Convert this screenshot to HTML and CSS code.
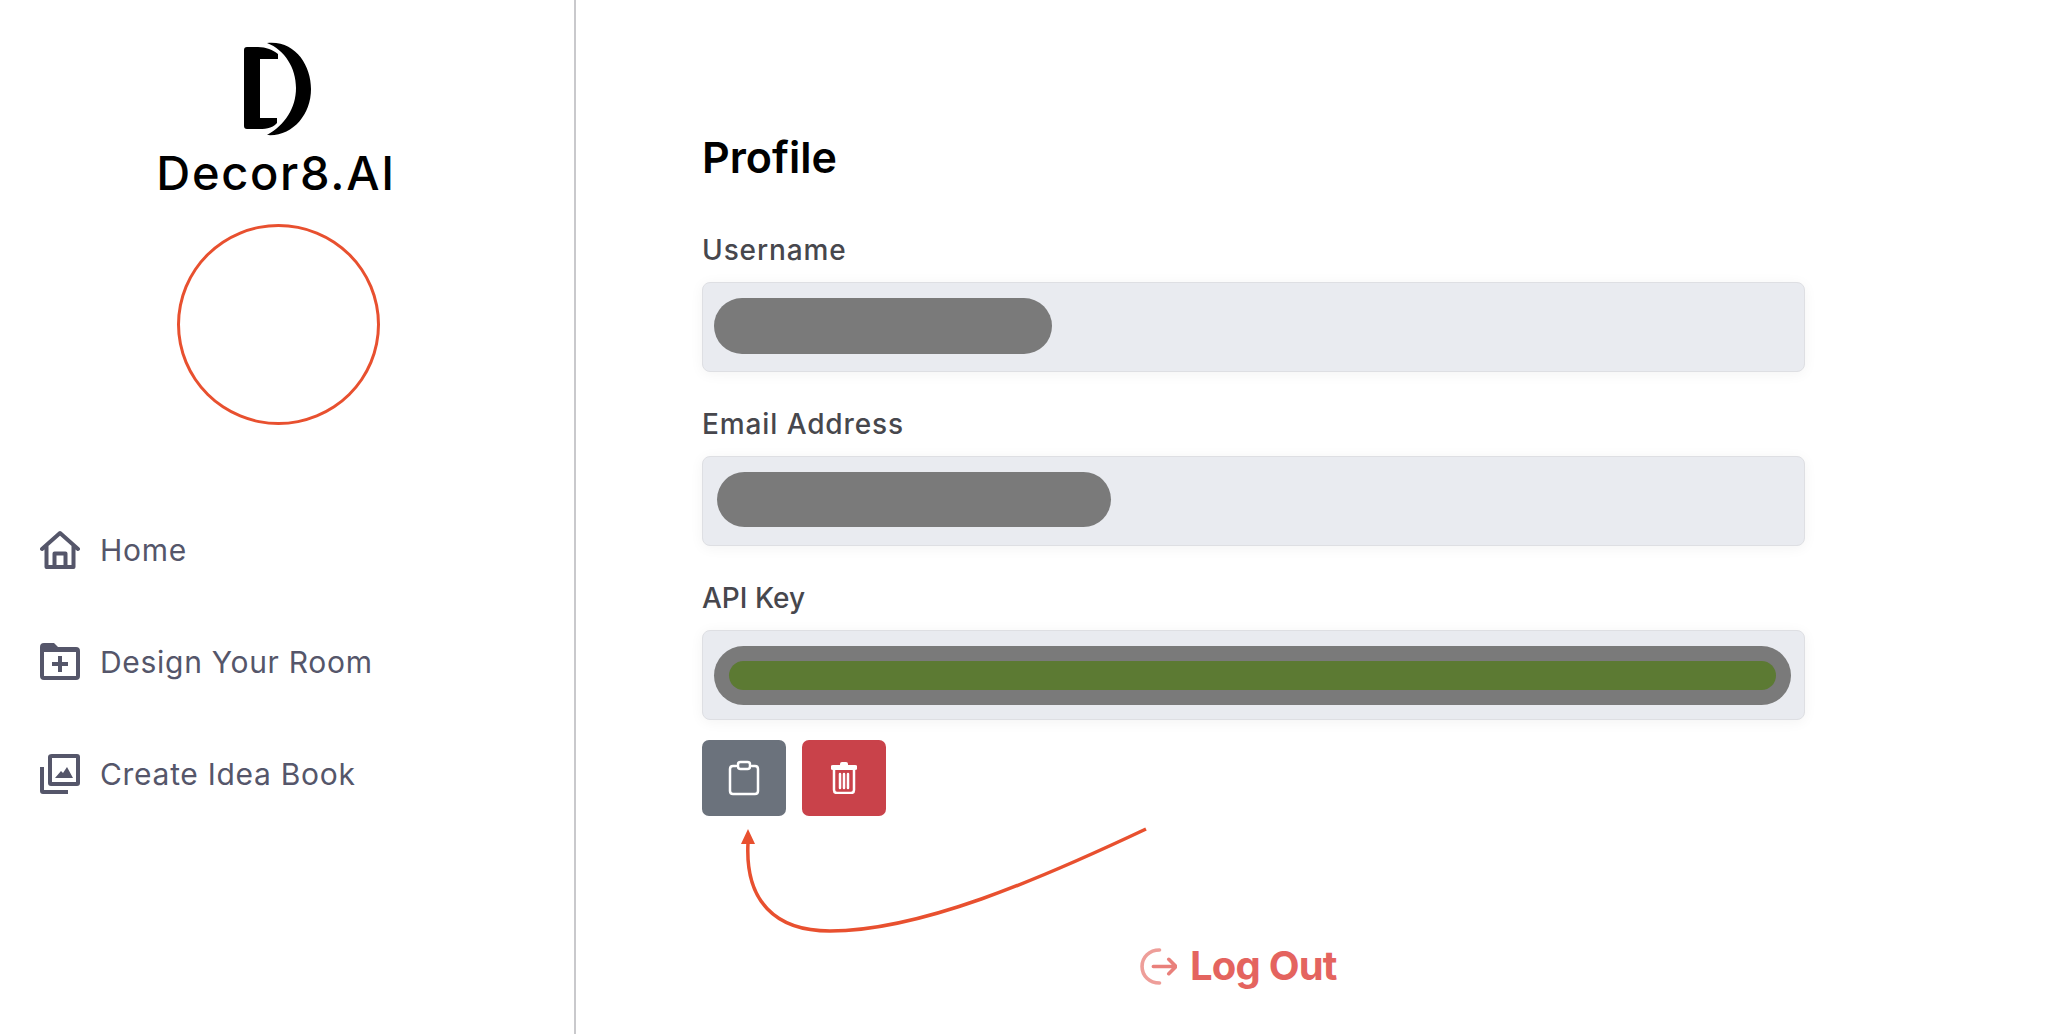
FILE: index.html
```html
<!DOCTYPE html>
<html lang="en">
<head>
  <meta charset="UTF-8" />
  <meta name="viewport" content="width=device-width, initial-scale=1.0"/>
  <title>Profile - Decor8.AI</title>
  <link rel="stylesheet" href="styles.css">
</head>
<body>

  <aside class="sidebar">
    <div class="brand">
      <svg class="brand-mark" viewBox="0 0 68 96" aria-hidden="true">
        <path d="M3 5H14C22 5 29 8 34 12V17H16V76H33V81C28 87 20 87 13 87H3Q0 87 0 84V8Q0 5 3 5Z"/>
        <path d="M23 1C51 -2 67 23 67 47C67 73 48 95 23 93C41 83 52 66 52 46C52 26 41 8 23 1Z"/>
      </svg>
      <div class="brand-name">Decor8.AI</div>
    </div>

    <div class="avatar-ring"></div>

    <nav class="nav">
      <a class="nav-item" href="#">
        <svg class="nav-icon" viewBox="0 0 40 40" aria-hidden="true">
          <path class="line" d="M2 19L20 3L38 19M6.5 16V37H33.5V16M14.5 37V23.5H25.5V37"/>
        </svg>
        <span>Home</span>
      </a>
      <a class="nav-item" href="#">
        <svg class="nav-icon" viewBox="0 0 40 40" aria-hidden="true">
          <path fill-rule="evenodd" d="M4 1H14L18 5H36Q40 5 40 9V34Q40 38 36 38H4Q0 38 0 34V5Q0 1 4 1ZM4 10V34H36V10Z"/>
          <path d="M18 14H22V20H28V24H22V30H18V24H12V20H18Z"/>
        </svg>
        <span>Design Your Room</span>
      </a>
      <a class="nav-item" href="#">
        <svg class="nav-icon" viewBox="0 0 40 40" aria-hidden="true">
          <path fill-rule="evenodd" d="M12 0H37Q40 0 40 3V29Q40 32 37 32H11Q8 32 8 29V3Q8 0 12 0ZM12 4V28H36V4Z"/>
          <path d="M15 24L21 17L23 19L27 13L33 24Z"/>
          <path d="M0 13H4V36H28V40H3Q0 40 0 37Z"/>
        </svg>
        <span>Create Idea Book</span>
      </a>
    </nav>
  </aside>

  <main class="main">
    <h1 class="title">Profile</h1>

    <div class="field">
      <label class="field-label">Username</label>
      <div class="field-box">
        <div class="blur-bar blur-name"></div>
      </div>
    </div>

    <div class="field">
      <label class="field-label">Email Address</label>
      <div class="field-box">
        <div class="blur-bar blur-email"></div>
      </div>
    </div>

    <div class="field">
      <label class="field-label field-label-short">API Key</label>
      <div class="field-box">
        <div class="blur-bar blur-key">
          <div class="blur-key-inner"></div>
        </div>
      </div>
    </div>

    <div class="key-buttons">
      <button class="icon-btn copy-btn" aria-label="Copy">
        <svg viewBox="0 0 32 36" aria-hidden="true">
          <path d="M8 6H5Q2 6 2 9V31Q2 34 5 34H27Q30 34 30 31V9Q30 6 27 6H24"/>
          <rect x="10" y="2" width="12" height="7" rx="2.5"/>
        </svg>
      </button>
      <button class="icon-btn delete-btn" aria-label="Delete">
        <svg viewBox="0 0 28 32" aria-hidden="true">
          <path class="fill" d="M1 4Q1 3 3 3H10V2Q10 0 12 0H16Q18 0 18 2V3H25Q27 3 27 4V7Q27 8 25 8H3Q1 8 1 7Z"/>
          <path d="M4 8V28Q4 31 7 31H21Q24 31 24 28V8M10 12V26M14 12V26M18 12V26"/>
        </svg>
      </button>
    </div>

    <div class="logout">
      <svg class="logout-icon" viewBox="0 0 36 36" aria-hidden="true">
        <path class="logout-arc" d="M19 2C9 2 2 9 2 18C2 27 9 34 19 34"/>
        <path class="logout-arrow" d="M13 18H35M28 11L35 18L28 25"/>
      </svg>
      <span>Log Out</span>
    </div>

    <!-- annotation arrow drawn over the page -->
    <svg class="note-arrow" viewBox="0 0 420 120" aria-hidden="true">
      <path class="note-line" d="M416 2C310 52 190 104 100 104C45 104 15 74 18 16"/>
      <path class="note-head" d="M18 2L25 17H11Z"/>
    </svg>
  </main>

</body>
</html>
```

FILE: styles.css
```css
* { box-sizing: border-box; }
body {
  font-family: 'Inter', 'Noto Sans', sans-serif;
  margin: 0;
  padding: 0;
  background: #fff;
  display: flex;
  min-height: 100vh;
}

/* sidebar */
.sidebar {
  width: 576px;
  flex-shrink: 0;
  border-right: 2px solid #c9c9cc;
  padding-top: 42px;
  display: flex;
  flex-direction: column;
}
.brand {
  display: flex;
  flex-direction: column;
  align-items: center;
  width: 552px;
}
.brand-mark {
  width: 68px;
  height: 96px;
  margin-left: 3px;
  fill: #000;
}
.brand-name {
  font-size: 47px;
  line-height: 56px;
  font-weight: 500;
  letter-spacing: 1.7px;
  color: #000;
  margin-top: 7px;
}
.avatar-ring {
  width: 203px;
  height: 201px;
  border: 3px solid #e8502f;
  border-radius: 50%;
  margin: 23px 0 0 177px;
}
.nav {
  display: flex;
  flex-direction: column;
  gap: 72px;
  padding-left: 40px;
  margin-top: 105px;
}
.nav-item {
  display: flex;
  align-items: center;
  gap: 20px;
  height: 40px;
  color: #55566a;
  font-size: 30px;
  letter-spacing: 0.7px;
  text-decoration: none;
}
.nav-icon {
  width: 40px;
  height: 40px;
  fill: #55566a;
}
.nav-icon .line {
  fill: none;
  stroke: #55566a;
  stroke-width: 4;
  stroke-linejoin: round;
  stroke-linecap: round;
}

/* main */
.main {
  position: relative;
  flex: 1;
  padding: 127px 0 0 126px;
}
.title {
  margin: 0 0 43px 0;
  font-size: 43px;
  line-height: 60px;
  font-weight: 600;
  color: #000;
}
.field {
  width: 1103px;
  margin-bottom: 32px;
}
.field-label {
  display: block;
  font-size: 28px;
  line-height: 40px;
  font-weight: 500;
  letter-spacing: 0.9px;
  color: #47474d;
  margin-bottom: 12px;
}
.field-label-short { letter-spacing: 0; }
.field-box {
  height: 90px;
  background: #e9ebf0;
  border: 1px solid #dedfe3;
  border-radius: 8px;
  box-shadow: 0 2px 14px rgba(0,0,0,0.05);
  display: flex;
  align-items: center;
  padding: 0 13px 0 11px;
}
.blur-bar {
  background: #7a7a7a;
  border-radius: 30px;
}
.blur-name {
  width: 338px;
  height: 56px;
  margin-bottom: 3px;
}
.blur-email {
  width: 394px;
  height: 55px;
  margin: 0 0 3px 3px;
}
.blur-key {
  flex: 1;
  height: 59px;
  padding: 15px;
}
.blur-key-inner {
  height: 29px;
  background: #5c7a33;
  border-radius: 15px;
}
.key-buttons {
  display: flex;
  gap: 16px;
  margin-top: -12px;
}
.icon-btn {
  width: 84px;
  height: 76px;
  border: none;
  border-radius: 7px;
  padding: 0;
  display: flex;
  align-items: center;
  justify-content: center;
  cursor: pointer;
}
.icon-btn svg {
  fill: none;
  stroke: #fff;
  stroke-width: 2.5;
  stroke-linecap: round;
  stroke-linejoin: round;
}
.icon-btn .fill {
  fill: #fff;
  stroke: none;
}
.copy-btn { background: #6b727c; }
.copy-btn svg { width: 32px; height: 36px; }
.delete-btn { background: #c9424a; }
.delete-btn svg { width: 28px; height: 32px; }
.logout {
  display: flex;
  align-items: center;
  gap: 13px;
  margin: 130px 0 0 438px;
  color: #e4645f;
  font-size: 40px;
  line-height: 40px;
  font-weight: 700;
  letter-spacing: -0.8px;
}
.logout-icon {
  width: 37px;
  height: 37px;
  fill: none;
  stroke-width: 3.5;
  stroke-linecap: round;
  stroke-linejoin: round;
}
.logout-arc { stroke: #ee9e99; }
.logout-arrow { stroke: #e9807b; }
.note-arrow {
  position: absolute;
  left: 154px;
  top: 827px;
  width: 420px;
  height: 120px;
  overflow: visible;
}
.note-line {
  fill: none;
  stroke: #e8502f;
  stroke-width: 3.5;
}
.note-head { fill: #e8502f; }
```
